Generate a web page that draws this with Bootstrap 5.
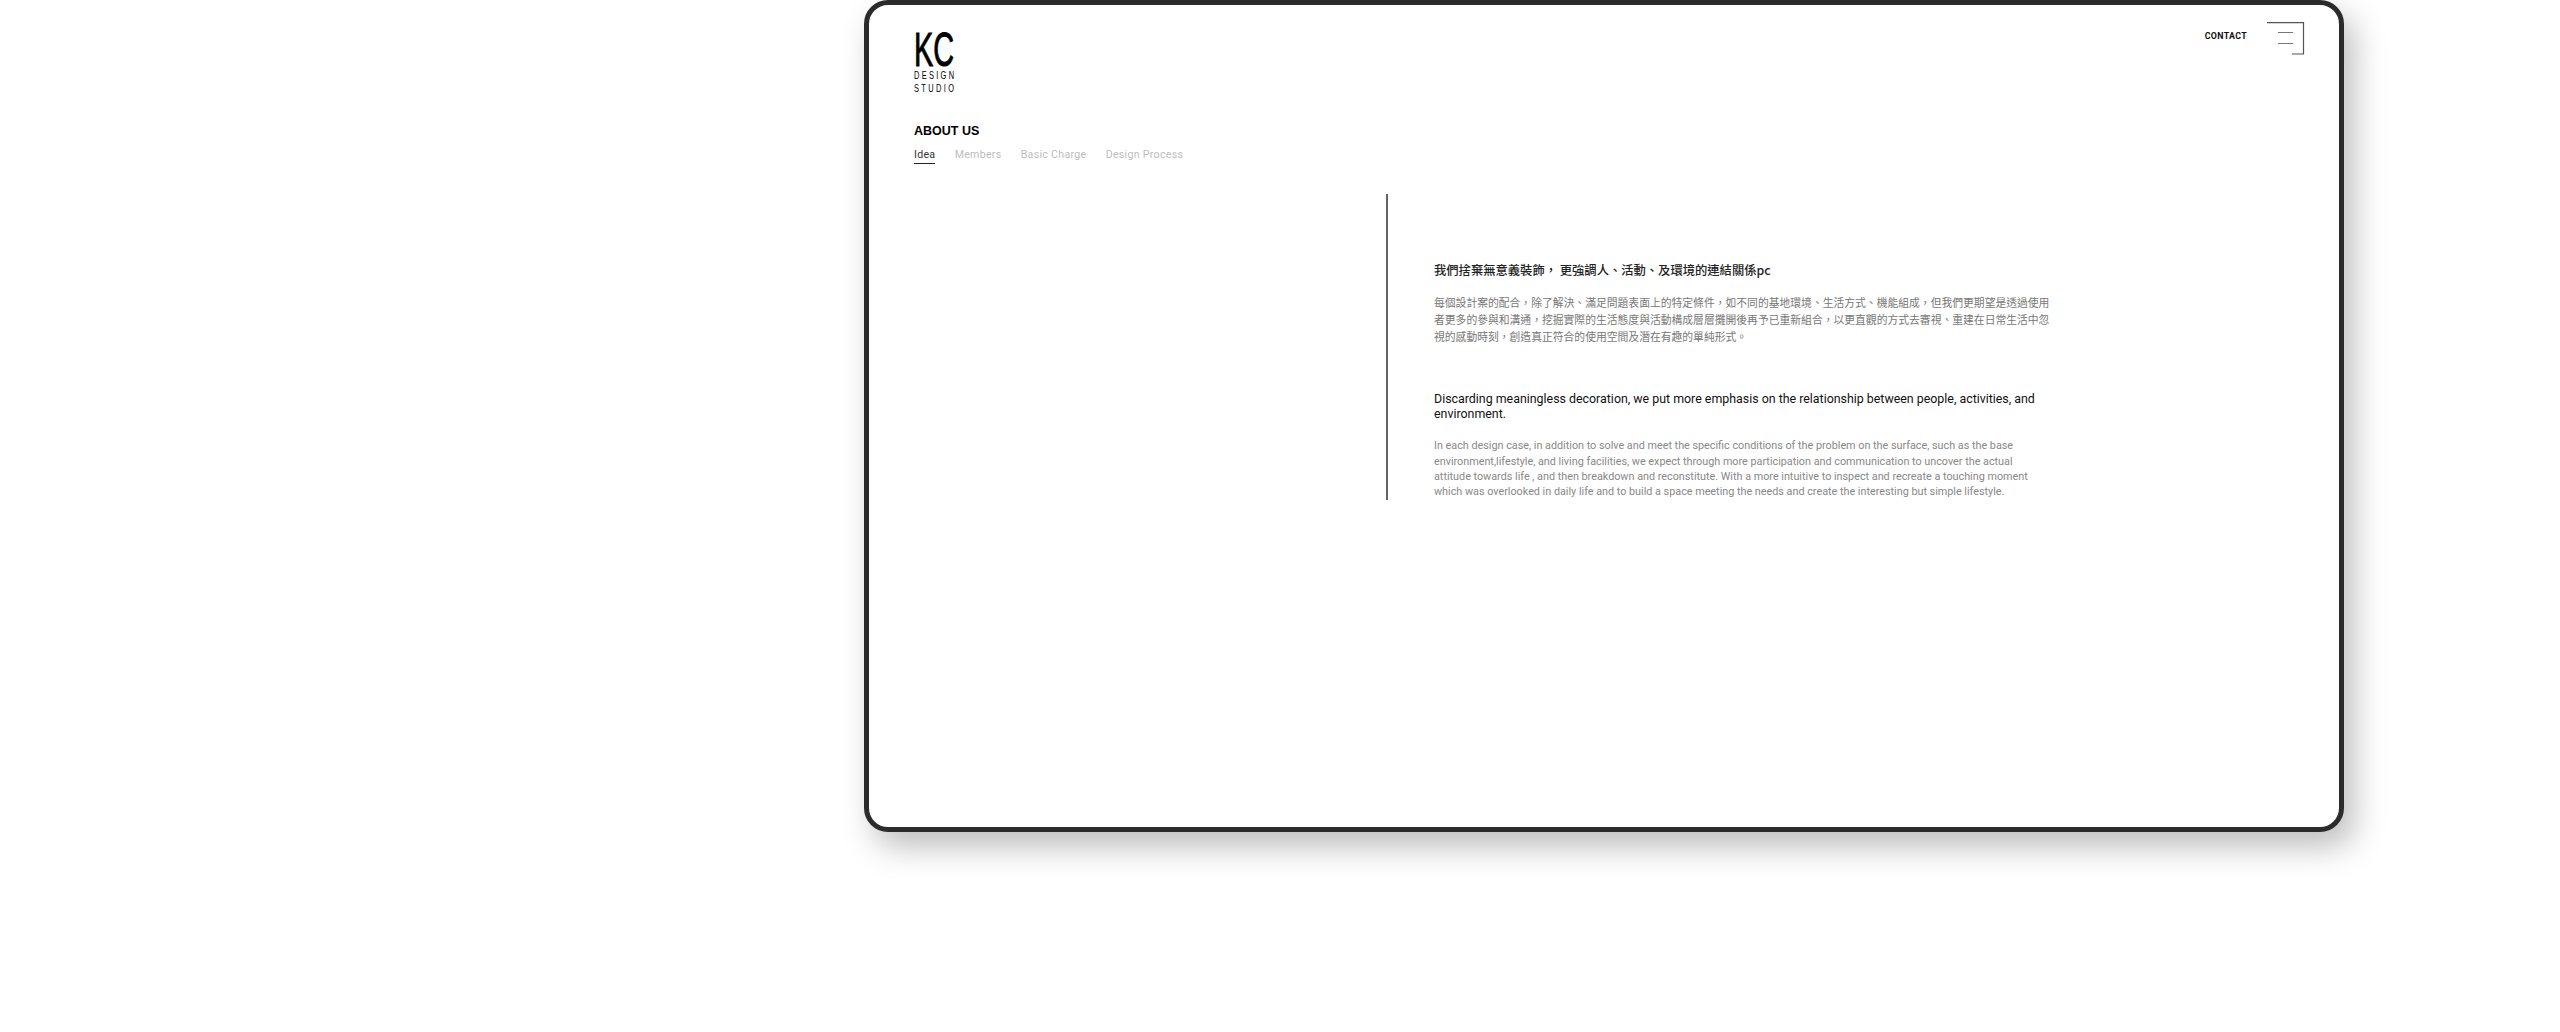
<!DOCTYPE html>
<html lang="zh-Hant">
<head>
<meta charset="utf-8">
<title>KC Design Studio</title>
<link href="https://cdn.jsdelivr.net/npm/bootstrap@5.3.0/dist/css/bootstrap.min.css" rel="stylesheet">
<style>
html,body{height:100%;background:#fff;overflow:hidden}
body{font-family:Roboto,"Noto Sans CJK TC",sans-serif;color:#000}
.stage{height:1032px;padding-left:864px;padding-right:216px}
.frame{height:832px;border:5px solid #2b2b2b;border-radius:24px;background:#fff;box-shadow:10px 15px 32px rgba(0,0,0,.26);padding:22px 34px 0 45px}
.logo-svg{display:block;width:44px;height:66px;overflow:visible}
.logo-svg text{font-family:"Liberation Sans",sans-serif;fill:#000}
.logo-kc{stroke:#000;stroke-width:1}
.contact-link{font:700 8.8px/1 Roboto,sans-serif;color:#111;text-decoration:none;letter-spacing:.35px;margin-top:5px}
.burger{width:38px;height:33px;display:block;margin-top:-5px}
.sect-title{font:700 12.5px/1 "Liberation Sans",sans-serif;margin:32px 0 10px}
.tabs-row{gap:19.2px;font-size:10.6px;line-height:14px;letter-spacing:.3px}
.tab-link{color:#bdbdbd;text-decoration:none;padding-bottom:1px}
.tab-on{color:#333;border-bottom:1px solid #222}
.body-row{margin-top:30px;padding-left:472px}
.copy-col{width:660px;border-left:2px solid #666;padding:67px 0 0 46px;height:306px}
.h-zh{font:500 12.3px/18px "Noto Sans CJK TC",Roboto,sans-serif;color:#222;margin:0 0 15px}
.p-zh{font:400 10.8px/17.1px "Noto Sans CJK TC",sans-serif;color:#777;margin:0 0 46px;width:622px}
.h-en{font:400 12.4px/15.7px Roboto,sans-serif;color:#111;margin:0 0 16px;width:622px}
.p-en{font:400 10.8px/15.4px Roboto,sans-serif;color:#888;margin:0;width:608px}
</style>
</head>
<body>
<div class="stage">
  <div class="frame">
    <div class="d-flex justify-content-between align-items-start">
      <svg class="logo-svg" viewBox="0 0 44 66" role="img" aria-label="KC Design Studio">
        <text class="logo-kc" x="0" y="39" font-size="49" textLength="40" lengthAdjust="spacingAndGlyphs">KC</text>
        <text transform="scale(.68 1)" x="0" y="52" font-size="11" textLength="59" lengthAdjust="spacing">DESIGN</text>
        <text transform="scale(.68 1)" x="0" y="65" font-size="11" textLength="59" lengthAdjust="spacing">STUDIO</text>
      </svg>
      <div class="d-flex align-items-start gap-3">
        <a class="contact-link me-1" href="#">CONTACT</a>
        <svg class="burger" viewBox="0 0 38 33" fill="none" stroke="#444" stroke-width="1.2" aria-hidden="true">
          <path d="M0 .6H36.5V32H25" stroke="#555"/>
          <path d="M11 10.5H26M11 21.5H26" stroke="#777"/>
        </svg>
      </div>
    </div>
    <div class="sect-title">ABOUT US</div>
    <div class="d-flex tabs-row">
      <a class="tab-link tab-on" href="#">Idea</a>
      <a class="tab-link" href="#">Members</a>
      <a class="tab-link" href="#">Basic Charge</a>
      <a class="tab-link" href="#">Design Process</a>
    </div>
    <div class="body-row">
      <div class="copy-col">
        <h2 class="h-zh">我們捨棄無意義裝飾， 更強調人、活動、及環境的連結關係pc</h2>
        <p class="p-zh">每個設計案的配合，除了解決、滿足問題表面上的特定條件，如不同的基地環境、生活方式、機能組成，但我們更期望是透過使用者更多的參與和溝通，挖掘實際的生活態度與活動構成層層攤開後再予已重新組合，以更直觀的方式去審視、重建在日常生活中忽視的感動時刻，創造真正符合的使用空間及潛在有趣的單純形式。</p>
        <h2 class="h-en">Discarding meaningless decoration, we put more emphasis on the relationship between people, activities, and environment.</h2>
        <p class="p-en">In each design case, in addition to solve and meet the specific conditions of the problem on the surface, such as the base environment,lifestyle, and living facilities, we expect through more participation and communication to uncover the actual attitude towards life , and then breakdown and reconstitute. With a more intuitive to inspect and recreate a touching moment which was overlooked in daily life and to build a space meeting the needs and create the interesting but simple lifestyle.</p>
      </div>
    </div>
  </div>
</div>
<script src="https://cdn.jsdelivr.net/npm/bootstrap@5.3.0/dist/js/bootstrap.bundle.min.js"></script>
</body>
</html>
